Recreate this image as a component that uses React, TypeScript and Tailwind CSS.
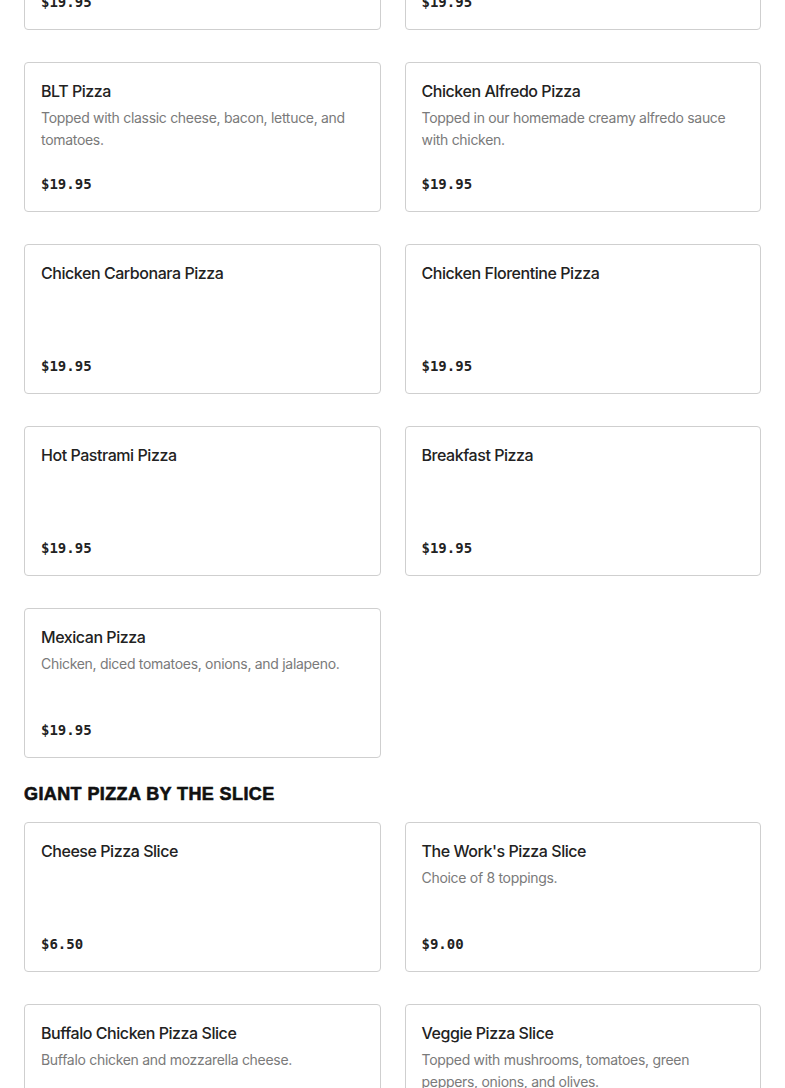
import React from "react";

type Item = { name: string; desc?: string; price: string };

const pizzas: Item[] = [
  { name: "Supreme Pizza", desc: "", price: "$19.95" },
  { name: "Hawaiian Pizza", desc: "", price: "$19.95" },
  { name: "BLT Pizza", desc: "Topped with classic cheese, bacon, lettuce, and tomatoes.", price: "$19.95" },
  { name: "Chicken Alfredo Pizza", desc: "Topped in our homemade creamy alfredo sauce with chicken.", price: "$19.95" },
  { name: "Chicken Carbonara Pizza", price: "$19.95" },
  { name: "Chicken Florentine Pizza", price: "$19.95" },
  { name: "Hot Pastrami Pizza", price: "$19.95" },
  { name: "Breakfast Pizza", price: "$19.95" },
  { name: "Mexican Pizza", desc: "Chicken, diced tomatoes, onions, and jalapeno.", price: "$19.95" },
];

const slices: Item[] = [
  { name: "Cheese Pizza Slice", price: "$6.50" },
  { name: "The Work's Pizza Slice", desc: "Choice of 8 toppings.", price: "$9.00" },
  { name: "Buffalo Chicken Pizza Slice", desc: "Buffalo chicken and mozzarella cheese.", price: "$9.00" },
  { name: "Veggie Pizza Slice", desc: "Topped with mushrooms, tomatoes, green peppers, onions, and olives.", price: "$9.00" },
];

function Card({ item }: { item: Item }) {
  return (
    <div className="flex h-[150px] flex-col justify-between rounded-[4px] border border-[#cfcfcf] bg-white px-4 pt-4 pb-4">
      <div>
        <div className="text-[16px] leading-[24px] font-medium tracking-[-0.45px] text-[#222222] [font-family:Inter,'Noto_Sans',sans-serif]">
          {item.name}
        </div>
        {item.desc ? (
          <div className="mt-1 text-[14px] leading-[22px] tracking-[-0.3px] text-[#7a7a7a] [font-family:Inter,'Noto_Sans',sans-serif]">
            {item.desc}
          </div>
        ) : null}
      </div>
      <div className="text-[14px] leading-[22px] font-bold text-[#222222] [font-family:'DejaVu_Sans_Mono',monospace]">
        {item.price}
      </div>
    </div>
  );
}

export default function App() {
  return (
    <div className="min-h-screen overflow-hidden bg-white">
      <div className="mt-[-120px] px-6">
        <div className="grid grid-cols-2 gap-x-6 gap-y-8">
          {pizzas.map((p, i) => (
            <Card key={i} item={p} />
          ))}
        </div>
        <h2 className="mt-[22px] mb-[14px] text-[18px] leading-[28px] font-black tracking-[0.4px] text-[#111111] uppercase [-webkit-text-stroke:0.6px_#111111] [font-family:'Liberation_Sans',Arial,sans-serif]">
          Giant Pizza by the Slice
        </h2>
        <div className="grid grid-cols-2 gap-x-6 gap-y-8">
          {slices.map((p, i) => (
            <Card key={i} item={p} />
          ))}
        </div>
      </div>
    </div>
  );
}
